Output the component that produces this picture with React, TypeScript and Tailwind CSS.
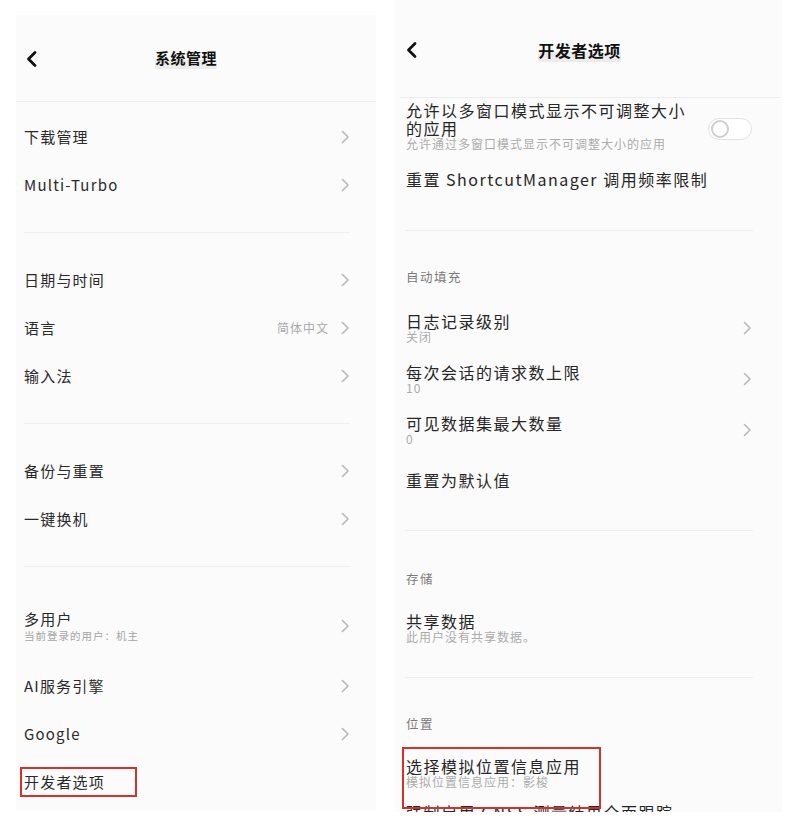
import React from 'react';

const font = { fontFamily: '"Noto Sans CJK SC", "Noto Sans", sans-serif' };

const Chevron = () => (
    <svg width="9" height="14" viewBox="0 0 9 14" fill="none" className="shrink-0">
        <path d="M1.5 1.5 L7 7 L1.5 12.5" stroke="#b8b8b8" strokeWidth="1.6" strokeLinecap="round" strokeLinejoin="round" />
    </svg>
);

const Back = () => (
    <svg width="14" height="18" viewBox="0 0 14 18" fill="none">
        <path d="M10 2.5 L3.5 9 L10 15.5" stroke="#111" strokeWidth="2.8" strokeLinecap="round" strokeLinejoin="round" />
    </svg>
);

const Toggle = () => (
    <div className="w-[44px] h-[22px] rounded-full border-[1.5px] border-[#e2e2e2] bg-white flex items-center pl-[2px]">
        <div className="w-[18px] h-[18px] rounded-full border-[2.5px] border-[#cfcfcf] bg-white" />
    </div>
);

type LeftItem = { title: string; sub?: string; value?: string };

const LeftRow = ({ item }: { item: LeftItem }) => (
    <div className={`flex items-center justify-between pl-2 pr-[26px] ${item.sub ? 'h-[72px]' : 'h-12'}`}>
        <div className="flex flex-col">
            <span className="text-[15px] leading-[18px] tracking-[1.2px] text-[#2a2a2a]">{item.title}</span>
            {item.sub && (
                <span className="text-[10.5px] leading-[15px] tracking-[1px] text-[#a5a5a5]">{item.sub}</span>
            )}
        </div>
        <div className="flex items-center gap-3">
            {item.value && <span className="text-[12px] tracking-[1px] text-[#a8a8a8]">{item.value}</span>}
            <Chevron />
        </div>
    </div>
);

const LeftDivider = () => <div className="h-px bg-[#efefef] ml-2 mr-[26px] my-[23px]" />;

const LeftPanel = () => (
    <div className="w-[360px] h-[795px] mt-[15px] bg-[#fbfbfb] overflow-hidden">
        <div className="h-[86px] relative flex items-center justify-center pr-[20px]">
            <div className="absolute left-[9px] top-[35px]">
                <Back />
            </div>
            <span className="text-[15px] font-bold tracking-[0.5px] text-[#111] bg-[linear-gradient(transparent_60%,#ececec_60%)]">系统管理</span>
        </div>
        <div className="h-px bg-[#ededed]" />
        <div className="pt-[11px]">
            <LeftRow item={{ title: '下载管理' }} />
            <LeftRow item={{ title: 'Multi-Turbo' }} />
            <LeftDivider />
            <LeftRow item={{ title: '日期与时间' }} />
            <LeftRow item={{ title: '语言', value: '简体中文' }} />
            <LeftRow item={{ title: '输入法' }} />
            <LeftDivider />
            <LeftRow item={{ title: '备份与重置' }} />
            <LeftRow item={{ title: '一键换机' }} />
            <LeftDivider />
            <LeftRow item={{ title: '多用户', sub: '当前登录的用户：机主' }} />
            <LeftRow item={{ title: 'AI服务引擎' }} />
            <LeftRow item={{ title: 'Google' }} />
            <div className="h-12 flex items-center pl-1 relative">
                <div className="border-2 border-[#d2322d] h-[30px] w-[117px] flex items-center pl-[2px]">
                    <span className="text-[15px] leading-[20px] tracking-[1.2px] text-[#2a2a2a]">开发者选项</span>
                </div>
            </div>
        </div>
    </div>
);

type RightItem = { title: string; sub?: string; chevron?: boolean };

const RightRow = ({ item, h }: { item: RightItem; h: string }) => (
    <div className={`flex items-center justify-between pl-[11px] pr-[30px] ${h}`}>
        <div className="flex flex-col">
            <span className="text-[16px] leading-[18px] tracking-[1.5px] text-[#262626]">{item.title}</span>
            {item.sub && (
                <span className="text-[12px] leading-[14px] tracking-[1px] text-[#ababab]">{item.sub}</span>
            )}
        </div>
        {item.chevron && <Chevron />}
    </div>
);

const SectionHeader = ({ label, h }: { label: string; h: string }) => (
    <div className={`flex items-center pl-[11px] ${h}`}>
        <span className="text-[12.5px] tracking-[1.5px] text-[#7a7a7a]">{label}</span>
    </div>
);

const RightDivider = ({ className }: { className: string }) => (
    <div className={`h-px bg-[#eeeeee] ml-[10px] mr-[29px] ${className}`} />
);

const RightPanel = () => (
    <div className="w-[387px] h-[812px] ml-[19px] bg-[#fbfbfb] overflow-hidden">
        <div className="h-[97px] relative flex justify-center pt-[38px] pr-[18px]">
            <div className="absolute left-[10px] top-[41px]">
                <Back />
            </div>
            <span className="text-[16px] leading-[24px] font-bold tracking-[0.5px] text-[#111] h-[24px] bg-[linear-gradient(transparent_60%,#ececec_60%)]">开发者选项</span>
        </div>
        <div className="h-px bg-[#ececec] ml-[5px] mr-[2px]" />
        <div className="h-[58px] flex items-start justify-between pl-[11px] pr-[30px] pt-[3px]">
            <div className="flex flex-col">
                <span className="text-[16px] leading-[18px] tracking-[1.5px] text-[#262626]">允许以多窗口模式显示不可调整大小</span>
                <span className="text-[16px] leading-[18px] tracking-[1.5px] text-[#262626]">的应用</span>
                <span className="text-[12px] leading-[14px] tracking-[1px] text-[#ababab]">允许通过多窗口模式显示不可调整大小的应用</span>
            </div>
            <div className="mt-[17px]">
                <Toggle />
            </div>
        </div>
        <RightRow item={{ title: '重置 ShortcutManager 调用频率限制' }} h="h-[46px]" />
        <RightDivider className="mt-[28px]" />
        <SectionHeader label="自动填充" h="h-[71px] pt-[22px]" />
        <RightRow item={{ title: '日志记录级别', sub: '关闭', chevron: true }} h="h-[51px]" />
        <RightRow item={{ title: '每次会话的请求数上限', sub: '10', chevron: true }} h="h-[51px]" />
        <RightRow item={{ title: '可见数据集最大数量', sub: '0', chevron: true }} h="h-[51px]" />
        <RightRow item={{ title: '重置为默认值' }} h="h-[50px]" />
        <RightDivider className="mt-[25px]" />
        <SectionHeader label="存储" h="h-[72px] pt-[24px]" />
        <RightRow item={{ title: '共享数据', sub: '此用户没有共享数据。' }} h="h-[50px]" />
        <RightDivider className="mt-[24px]" />
        <SectionHeader label="位置" h="h-[69px] pt-[23px]" />
        <div className="relative">
            <RightRow item={{ title: '选择模拟位置信息应用', sub: '模拟位置信息应用：影梭' }} h="h-[52px]" />
            <div className="absolute left-[7px] top-0 w-[199px] h-[62px] border-2 border-[#d2322d] z-10" />
        </div>
        <div className="pl-[11px] pt-[1px]">
            <span className="text-[16px] leading-[18px] tracking-[1.5px] text-[#262626]">强制启用 GNSS 测量结果全面跟踪</span>
        </div>
    </div>
);

export default function App() {
    return (
        <div className="w-[800px] h-[826px] bg-white flex" style={font}>
            <div className="ml-4 flex">
                <LeftPanel />
                <RightPanel />
            </div>
        </div>
    );
}
